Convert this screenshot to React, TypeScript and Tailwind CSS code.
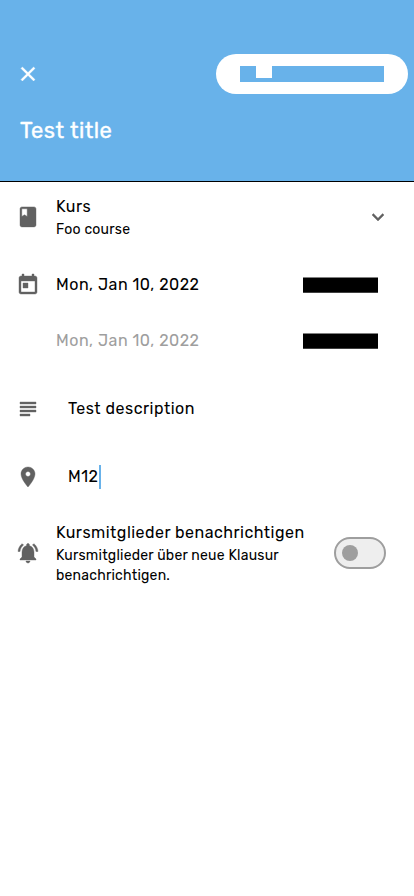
import type { ReactNode } from "react";

const paths = {
  close: "M19 6.41 17.59 5 12 10.59 6.41 5 5 6.41 10.59 12 5 17.59 6.41 19 12 13.41 17.59 19 19 17.59 13.41 12z",
  book: "M18 1.9H6c-1.1 0-2 .9-2 2v16c0 1.1.9 2 2 2h12c1.1 0 2-.9 2-2v-16c0-1.1-.9-2-2-2zM5.8 3.8h5.4v7.6L8.5 9.8 5.8 11.4V3.8z",
  calendar: "M19 3h-1V1h-2v2H8V1H6v2H5c-1.11 0-1.99.9-1.99 2L3 19c0 1.1.89 2 2 2h14c1.1 0 2-.9 2-2V5c0-1.1-.9-2-2-2zm0 16H5V8h14v11zM7 10h5v5H7z",
  notes: "M4 5h16v2H4zM4 9h16v2H4zM4 13h16v2H4zM4 17h10v2H4z",
  pin: "M12 2C8.13 2 5 5.13 5 9c0 5.25 7 13 7 13s7-7.75 7-13c0-3.87-3.13-7-7-7zm0 9.5c-1.38 0-2.5-1.12-2.5-2.5s1.12-2.5 2.5-2.5 2.5 1.12 2.5 2.5-1.12 2.5-2.5 2.5z",
  bell: "M7.58 4.08 6.15 2.65C3.75 4.48 2.17 7.3 2.03 10.5h2c.15-2.65 1.51-4.97 3.55-6.42zm12.39 6.42h2c-.15-3.2-1.73-6.02-4.12-7.85l-1.42 1.43c2.02 1.45 3.39 3.77 3.54 6.42zM18 11c0-3.07-1.64-5.64-4.5-6.32V4c0-.83-.67-1.5-1.5-1.5s-1.5.67-1.5 1.5v.68C7.63 5.36 6 7.92 6 11v5l-2 2v1h16v-1l-2-2v-5zm-6 11c.14 0 .27-.01.4-.04.65-.14 1.18-.58 1.44-1.18.1-.24.15-.5.15-.78h-4c.01 1.1.9 2 2.01 2z",
  chevron: "M7.41 8.59 12 13.17l4.59-4.58L18 10l-6 6-6-6 1.41-1.41z",
};

function Icon({ name, className = "" }: { name: keyof typeof paths; className?: string }) {
  return (
    <svg
      viewBox="0 0 24 24"
      fill="currentColor"
      stroke="currentColor"
      strokeWidth={0.4}
      strokeLinejoin="round"
      className={`size-6 shrink-0 ${className}`}
      aria-hidden="true"
    >
      <path d={paths[name]} />
    </svg>
  );
}

function Row({ icon, className, children }: { icon?: keyof typeof paths; className: string; children: ReactNode }) {
  return (
    <div className={`flex items-center pl-4 ${className}`}>
      <div className="mr-4 size-6 shrink-0 text-[#616161]">{icon && <Icon name={icon} />}</div>
      {children}
    </div>
  );
}

function TimeBlock() {
  return <div className="h-4 w-[75px] border-t border-b border-t-[#808080] border-b-[#404040] bg-black" />;
}

export default function App() {
  return (
    <div className="h-[896px] w-full overflow-hidden bg-white font-['Rubik','Roboto',sans-serif] text-base text-black">
      <header className="h-[182px] border-b border-black bg-[#68b2ea] pt-[54px] text-white">
        <div className="flex items-center justify-between pr-1.5 pl-4">
          <Icon name="close" />
          <div className="flex h-10 w-48 items-center justify-center rounded-full bg-white">
            <div className="h-4 w-36 bg-[#68b2ea] pl-4">
              <div className="h-3 w-4 bg-white" />
            </div>
          </div>
        </div>
        <h1 className="mt-[23px] pl-5 text-[22px] leading-7 font-normal tracking-[0.45px] [-webkit-text-stroke:0.35px_white]">
          Test title
        </h1>
      </header>

      <main>
        <Row icon="book" className="h-[70px] pr-6">
          <div className="flex-1">
            <div className="leading-6 tracking-[0.5px]">Kurs</div>
            <div className="-mb-px pt-px text-sm leading-5 tracking-[0.22px]">Foo course</div>
          </div>
          <Icon name="chevron" className="text-[#616161]" />
        </Row>
        <Row icon="calendar" className="h-[66px] pr-9">
          <div className="flex-1 tracking-[0.5px]">Mon, Jan 10, 2022</div>
          <TimeBlock />
        </Row>
        <Row className="h-12 pr-9 pb-0.5">
          <div className="flex-1 tracking-[0.5px] text-[#9e9e9e]">Mon, Jan 10, 2022</div>
          <TimeBlock />
        </Row>
        <Row icon="notes" className="h-[84px] pt-0.5">
          <div className="pl-3 tracking-[0.5px]">Test description</div>
        </Row>
        <Row icon="pin" className="h-[54px]">
          <div className="pl-3 tracking-[0.5px]">M12</div>
          <div className="ml-px h-6 w-0.5 bg-[#68b2ea]" />
        </Row>
        <Row icon="bell" className="h-[98px] pr-7">
          <div className="flex-1 whitespace-nowrap">
            <div className="leading-6 tracking-[0.48px]">Kursmitglieder benachrichtigen</div>
            <div className="-mb-px pt-px text-sm leading-5 tracking-[0.22px]">
              Kursmitglieder über neue Klausur
              <br />
              benachrichtigen.
            </div>
          </div>
          <div className="flex h-8 w-[52px] items-center rounded-full border-2 border-[#9e9e9e] bg-[#eeeeee] pl-1.5">
            <div className="size-4 rounded-full bg-[#9e9e9e]" />
          </div>
        </Row>
      </main>
    </div>
  );
}
